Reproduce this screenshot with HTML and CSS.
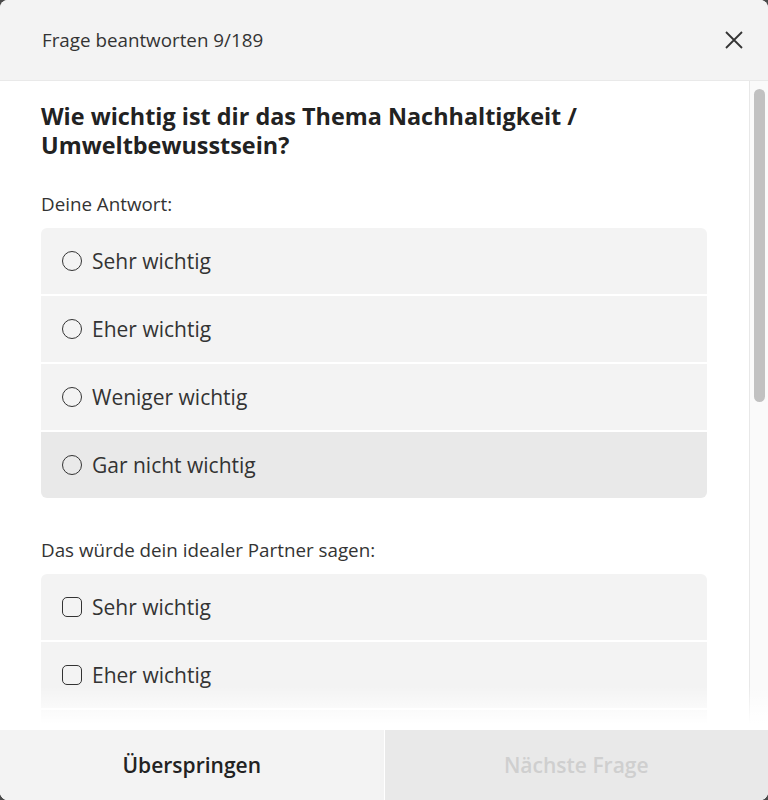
FILE: index.html
```html
<!DOCTYPE html>
<html lang="de">
<head>
<meta charset="utf-8">
<title>Frage beantworten</title>
<link rel="stylesheet" href="styles.css">
</head>
<body>
<div class="modal">
  <header class="modal-header">
    <span class="modal-title">Frage beantworten 9/189</span>
    <button class="close" aria-label="Schließen">
      <svg width="18" height="18" viewBox="0 0 18 18"><path d="M1 1 L17 17 M17 1 L1 17" stroke="#333" stroke-width="1.8" fill="none"/></svg>
    </button>
  </header>
  <div class="modal-body-wrap">
    <div class="modal-body">
      <h2 class="question">Wie wichtig ist dir das Thema Nachhaltigkeit / Umweltbewusstsein?</h2>
      <p class="section-label">Deine Antwort:</p>
      <div class="options">
        <div class="option"><span class="radio"></span>Sehr wichtig</div>
        <div class="option"><span class="radio"></span>Eher wichtig</div>
        <div class="option"><span class="radio"></span>Weniger wichtig</div>
        <div class="option hover"><span class="radio"></span>Gar nicht wichtig</div>
      </div>
      <p class="section-label second">Das würde dein idealer Partner sagen:</p>
      <div class="options">
        <div class="option"><span class="check"></span>Sehr wichtig</div>
        <div class="option"><span class="check"></span>Eher wichtig</div>
        <div class="option"><span class="check"></span>Weniger wichtig</div>
        <div class="option"><span class="check"></span>Gar nicht wichtig</div>
      </div>
    </div>
    <div class="scrollbar"><div class="thumb"></div></div>
    <div class="fade"></div>
  </div>
  <footer class="modal-footer">
    <button class="btn skip">Überspringen</button>
    <button class="btn next" disabled>Nächste Frage</button>
  </footer>
</div>
</body>
</html>
```
FILE: styles.css
```css
* { box-sizing: border-box; }
html, body { margin: 0; padding: 0; }
body {
  background: #4a4a4a;
  font-family: "Open Sans", "Liberation Sans", sans-serif;
  color: #333;
}
.modal {
  width: 768px;
  height: 800px;
  background: #fff;
  border-radius: 8px;
  overflow: hidden;
  display: flex;
  flex-direction: column;
}
.modal-header {
  height: 81px;
  flex: none;
  background: #f3f3f3;
  border-bottom: 1px solid #e9e9e9;
  display: flex;
  align-items: center;
  justify-content: space-between;
  padding: 0 25px 0 42px;
}
.modal-title {
  font-size: 18.8px;
  color: #333;
}
.close {
  background: none;
  border: 0;
  padding: 0;
  width: 18px;
  height: 18px;
  display: flex;
  cursor: pointer;
}
.modal-body-wrap {
  position: relative;
  flex: 1;
  min-height: 0;
  display: flex;
}
.modal-body {
  flex: 1;
  overflow: hidden;
  padding: 21px 42px 40px 41px;
}
.scrollbar {
  width: 19px;
  flex: none;
  background: #fafafa;
  border-left: 1px solid #e8e8e8;
  padding: 8px 3px 0 4px;
}
.thumb {
  height: 313px;
  background: #c1c1c1;
  border-radius: 6px;
}
.question {
  margin: 0;
  font-size: 23.4px;
  line-height: 29px;
  font-weight: 700;
  color: #222;
}
.section-label {
  margin: 32px 0 12px;
  font-size: 18.8px;
  line-height: 24px;
  color: #333;
}
.section-label.second { margin-top: 40px; }
.options {
  display: flex;
  flex-direction: column;
  gap: 2px;
  border-radius: 6px;
  overflow: hidden;
}
.option {
  height: 66px;
  flex: none;
  background: #f3f3f3;
  display: flex;
  align-items: center;
  padding-left: 21px;
  gap: 10px;
  font-size: 21px;
  color: #333;
}
.option.hover { background: #e9e9e9; }
.radio {
  width: 20px;
  height: 20px;
  border: 1.5px solid #333;
  border-radius: 50%;
  flex: none;
}
.check {
  width: 20px;
  height: 20px;
  border: 1.5px solid #333;
  border-radius: 5px;
  flex: none;
}
.fade {
  position: absolute;
  left: 0;
  right: 0;
  bottom: 0;
  height: 44px;
  background: linear-gradient(to bottom, rgba(255,255,255,0), #fff 85%);
  pointer-events: none;
}
.modal-footer {
  height: 70px;
  flex: none;
  display: flex;
  gap: 1px;
  background: #fff;
}
.btn {
  flex: 1;
  border: 0;
  font-family: "Open Sans", "Liberation Sans", sans-serif;
  font-size: 21px;
  font-weight: 600;
  cursor: pointer;
}
.skip { background: #f3f3f3; color: #222; }
.next { background: #e9e9e9; color: #cfcfcf; }
```
